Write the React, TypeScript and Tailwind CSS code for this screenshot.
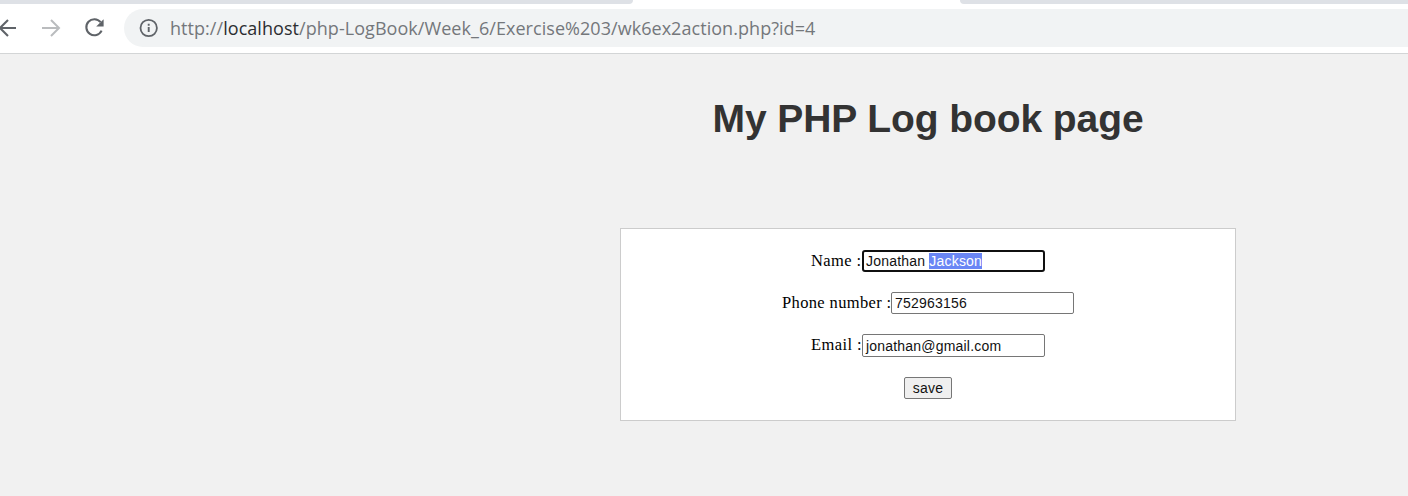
import React from 'react';

type FieldProps = { label: string; labelClass: string; inputClass: string; children: React.ReactNode };

function Field({ label, labelClass, inputClass, children }: FieldProps) {
  return (
    <div className="flex justify-center">
      <span className={`whitespace-nowrap font-['Liberation_Serif',serif] text-[16.5px] leading-[22px] text-black ${labelClass}`}>
        {label}
      </span>
      <div className={`flex w-[183px] items-center whitespace-pre bg-white font-['Liberation_Sans',sans-serif] text-[14px] leading-[16px] tracking-[0.2px] text-[#111] ${inputClass}`}>
        {children}
      </div>
    </div>
  );
}

export default function App() {
  return (
    <div className="flex h-[496px] w-[1408px] flex-col overflow-hidden bg-[#f1f1f1]">
      <div className="flex h-1 shrink-0 justify-between bg-white">
        <div className="w-[633px] rounded-br-[6px] bg-[#dee1e6]" />
        <div className="w-[448px] rounded-bl-[6px] bg-[#dee1e6]" />
      </div>
      <header className="flex h-[50px] shrink-0 items-start border-b border-[#d3d5d6] bg-white pt-[5px]">
        <div className="flex h-[38px] w-[124px] shrink-0 items-center">
          <svg className="h-[38px] w-[124px]" viewBox="0 0 124 38" fill="none">
            <path d="M16 19H0M8 11L0 19L8 27" stroke="#5f6368" strokeWidth="2.1" />
            <path d="M42 19H58M51 11L59 19L51 27" stroke="#babcbe" strokeWidth="2" />
            <path d="M100.6 13.2A8 8 0 1 0 101.6 21.6" stroke="#5f6368" strokeWidth="2.1" />
            <path d="M103.6 10.2V17.6H96.2Z" fill="#5f6368" />
          </svg>
        </div>
        <div className="flex h-[38px] flex-1 items-center rounded-l-full bg-[#f1f3f4] pl-[15px]">
          <svg className="h-5 w-5 shrink-0" viewBox="0 0 20 20" fill="none">
            <circle cx="9.7" cy="10" r="8.2" stroke="#5f6368" strokeWidth="1.8" />
            <path d="M9.7 9V14M9.7 5.8V7.7" stroke="#5f6368" strokeWidth="1.9" />
          </svg>
          <div className="ml-[11px] whitespace-nowrap font-['Open_Sans',sans-serif] text-[18px] font-normal leading-[24px] tracking-[0.05px] text-[#74777b]">
            http://<span className="text-[#2c2d30]">localhost</span>/php-LogBook/Week_6/Exercise%203/wk6ex2action.php?id=4
          </div>
        </div>
      </header>
      <main className="ml-[448px] flex w-[616px] flex-col self-center">
        <h1 className="mt-[41px] h-[48px] whitespace-nowrap text-center font-['Liberation_Sans',sans-serif] text-[39px] font-bold leading-[48px] tracking-[-0.08px] text-[#333333]">
          My PHP Log book page
        </h1>
        <form className="mt-[85px] flex h-[193px] flex-col gap-[20px] border border-[#cccccc] bg-white pt-[21px]">
          <Field label="Name :" labelClass="w-[51px] tracking-[0.4px]" inputClass="h-[22px] rounded-[3px] border-2 border-[#101010] pl-[2px]">
            Jonathan <span className="bg-[#6a86f5] text-white">Jackson</span>
          </Field>
          <Field label="Phone number :" labelClass="w-[109px] tracking-[0.36px]" inputClass="h-[22px] rounded-[2px] border border-[#767676] pl-[3px]">
            752963156
          </Field>
          <Field label="Email :" labelClass="w-[51px] tracking-[0.4px]" inputClass="h-[23px] rounded-[2px] border border-[#767676] pl-[3px]">
            jonathan@gmail.com
          </Field>
          <button type="button" className="flex h-[22px] w-[48px] items-center justify-center self-center rounded-[2px] border border-[#767676] bg-[#efefef] font-['Liberation_Sans',sans-serif] text-[14px] leading-[16px] tracking-[0.2px] text-[#111]">
            save
          </button>
        </form>
      </main>
    </div>
  );
}
